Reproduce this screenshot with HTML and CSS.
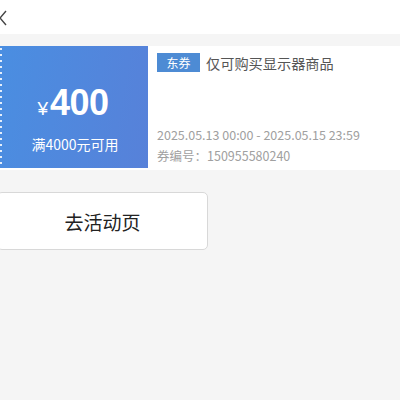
FILE: index.html
```html
<!DOCTYPE html>
<html>
<head>
<meta charset="utf-8">
<link rel="stylesheet" href="styles.css">
</head>
<body>
<div class="header">
  <svg class="back" width="10" height="16" viewBox="0 0 10 16"><path d="M7 1 L1 8 L7 15" fill="none" stroke="#444" stroke-width="1.4"/></svg>
</div>
<div class="card">
  <div class="left">
    <div class="amount"><span class="yen">¥</span><span class="num">400</span></div>
    <div class="cond">满4000元可用</div>
  </div>
  <div class="right">
    <div class="title"><span class="tag">东券</span><span class="name">仅可购买显示器商品</span></div>
    <div class="meta">
      <div class="date">2025.05.13 00:00 - 2025.05.15 23:59</div>
      <div class="code">券编号：150955580240</div>
    </div>
  </div>
</div>
<div class="btn">去活动页</div>
</body>
</html>
```
FILE: styles.css
```css
html, body { margin: 0; padding: 0; }
body {
  width: 400px; height: 400px; overflow: hidden;
  background: #f5f5f5;
  font-family: "Noto Sans CJK SC", "Liberation Sans", sans-serif;
}
.header { height: 34px; background: #fff; display: flex; align-items: center; }
.back { margin-left: -1px; margin-top: 1px; }
.card {
  margin-top: 12px; height: 124px; background: #fff;
  display: flex;
}
.left {
  width: 148px; height: 122px;
  background: linear-gradient(100deg, #4a8ee1 0%, #5781d9 100%);
  display: flex; flex-direction: column; align-items: center;
  position: relative; color: #fff;
}
.left::before {
  content: ""; position: absolute; left: 0; top: 0; bottom: 0; width: 3px;
  background: radial-gradient(circle at 1px 3px, rgba(255,255,255,0.85) 1px, transparent 1.3px) 0 0 / 3px 6px repeat-y;
}
.amount { margin-top: 36px; height: 40px; display: flex; align-items: baseline; margin-left: -2px; }
.yen { font-size: 19px; margin-right: 2px; font-family: "Liberation Sans", sans-serif; }
.num { font-size: 36px; font-weight: bold; font-family: "Liberation Sans", sans-serif; letter-spacing: -0.5px; }
.cond { margin-top: 12px; font-size: 14px; margin-left: 2px; }
.right { flex: 1; padding: 7px 0 0 9px; display: flex; flex-direction: column; }
.title { display: flex; align-items: center; height: 19px; }
.tag {
  background: #4d8bd4; color: #fff; font-size: 12px; width: 43px; height: 19px; line-height: 19px;
  text-align: center; margin-right: 6px;
}
.name { font-size: 14.2px; color: #555; }
.meta { margin-top: 52px; font-size: 12.5px; color: #a0a0a0; line-height: 21px; }
.btn {
  margin-top: 22px; margin-left: -3px; width: 209px; height: 56px;
  background: #fff; border: 1px solid #d8d8d8; border-radius: 5px;
  display: flex; align-items: center; justify-content: center;
  font-size: 19px; color: #222;
}
```
